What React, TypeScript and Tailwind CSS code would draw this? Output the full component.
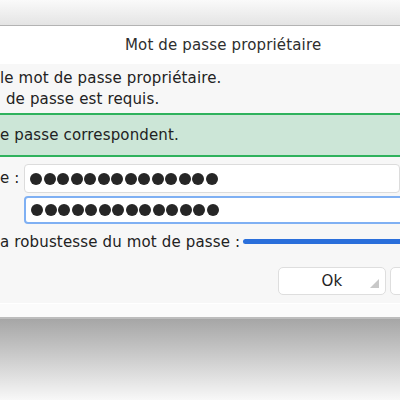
const font = "font-['DejaVu_Sans','Liberation_Sans',sans-serif]"

const Dots = () => (
  <div className="flex gap-[1.5px]">
    {Array.from({ length: 14 }).map((_, i) => (
      <span key={i} className="w-[12px] h-[12px] rounded-full bg-[#262626]" />
    ))}
  </div>
)

const App = () => {
  return (
    <div className={`w-[400px] h-[400px] overflow-hidden bg-white text-[15px] tracking-[0.15px] text-[#222] ${font}`}>
      <div className="h-[25px] bg-gradient-to-b from-[#fafafa] to-[#e4e4e4]" />
      <div className="h-px bg-[#b3b3b3]" />
      <div className="h-[38px] bg-white flex items-center pl-[125px] text-[#2e2e2e]">
        Mot de passe propriétaire
      </div>
      <div className="bg-[#f7f7f7] h-[239px] flex flex-col">
        <div className="pt-[4px] leading-[21px]">
          <p>le mot de passe propriétaire.</p>
          <p className="pl-[1px]">&nbsp;de passe est requis.</p>
        </div>
        <div className="mt-[3px] h-[44px] w-[410px] -ml-[5px] border-y-2 border-[#2fb25d] bg-[#cce6d7] flex items-center pl-[5px]">
          e passe correspondent.
        </div>
        <div className="mt-[7px] flex items-center">
          <span className="w-[25px]">e :</span>
          <div className="h-[29px] w-[390px] rounded-[4px] border border-[#dcdcdc] bg-white flex items-center pl-[5px]">
            <Dots />
          </div>
        </div>
        <div className="mt-[3px] pl-[24px]">
          <div className="h-[28px] w-[390px] rounded-[4px] border-2 border-[#7fb0f3] bg-white flex items-center pl-[5px]">
            <Dots />
          </div>
        </div>
        <div className="mt-[10px] flex items-center h-[16px]">
          <span className="whitespace-nowrap pr-[3px]">a robustesse du mot de passe :</span>
          <div className="flex-1 h-[5px] rounded-l-full bg-[#2a6fdb] mt-[-2px]" />
        </div>
        <div className="mt-[17px] flex pl-[278px] gap-[4px]">
          <div className="relative h-[28px] w-[108px] shrink-0 rounded-[5px] border border-[#dedede] bg-white flex items-center justify-center text-[#222]">
            Ok
            <svg className="absolute right-[6px] bottom-[6px]" width="9" height="9" viewBox="0 0 9 9">
              <path d="M9 0 L9 9 L0 9 Z" fill="#c8c8c8" />
            </svg>
          </div>
          <div className="h-[28px] w-[60px] shrink-0 rounded-[5px] border border-[#dedede] bg-white" />
        </div>
      </div>
      <div className="h-[14px] bg-[#fbfbfb] border-t border-[#ffffff]" />
      <div className="h-[2px] bg-[#bdbdbd]" />
      <div className="h-[81px] bg-gradient-to-b from-[#a6a6a6] to-[#f8f8f8]" />
    </div>
  )
}

export default App
